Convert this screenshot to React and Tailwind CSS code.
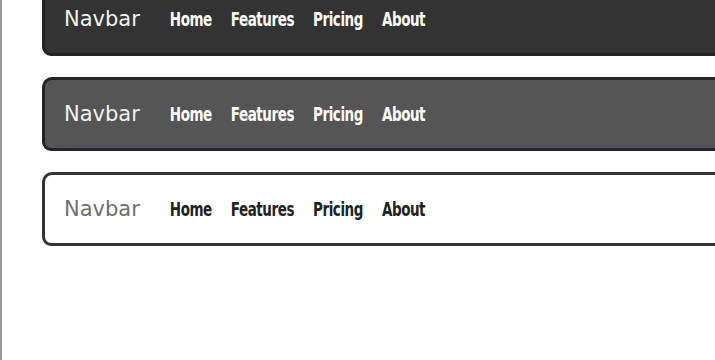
import React from "react";

const links = ["Home", "Features", "Pricing", "About"];

const Navbar = ({ bg, border, brand, link }) => {
  return (
    <nav
      className={`flex items-center h-[74px] ml-[40px] -mr-10 border-[3px] rounded-[10px_6px_8px_9px] pl-[19px] ${bg} ${border}`}
    >
      <a
        href="#"
        className={`text-[21px] leading-none font-['DejaVu_Sans',sans-serif] ${brand}`}
      >
        Navbar
      </a>
      <ul className="flex items-center gap-[19px] ml-[30px]">
        {links.map((item) => (
          <li key={item}>
            <a
              href="#"
              className={`inline-block scale-y-[1.3] text-[15px] leading-none tracking-[-0.45px] font-bold font-stretch-condensed font-['DejaVu_Sans',sans-serif] ${link}`}
            >
              {item}
            </a>
          </li>
        ))}
      </ul>
    </nav>
  );
};

export default function App() {
  return (
    <div className="min-h-screen h-[360px] overflow-hidden border-l-2 border-[#9a9a9a] bg-white">
      <div className="flex flex-col gap-[21px] mt-[-18px]">
        {/* dark */}
        <Navbar
          bg="bg-[#333333]"
          border="border-[#212529]"
          brand="text-[#f2f2f2]"
          link="text-white"
        />

        {/* grey */}
        <Navbar
          bg="bg-[#555555]"
          border="border-[#212529]"
          brand="text-[#f2f2f2]"
          link="text-white"
        />

        {/* light */}
        <Navbar
          bg="bg-white"
          border="border-[#333333]"
          brand="text-[#6f6f6f]"
          link="text-[#222222]"
        />
      </div>
    </div>
  );
}
